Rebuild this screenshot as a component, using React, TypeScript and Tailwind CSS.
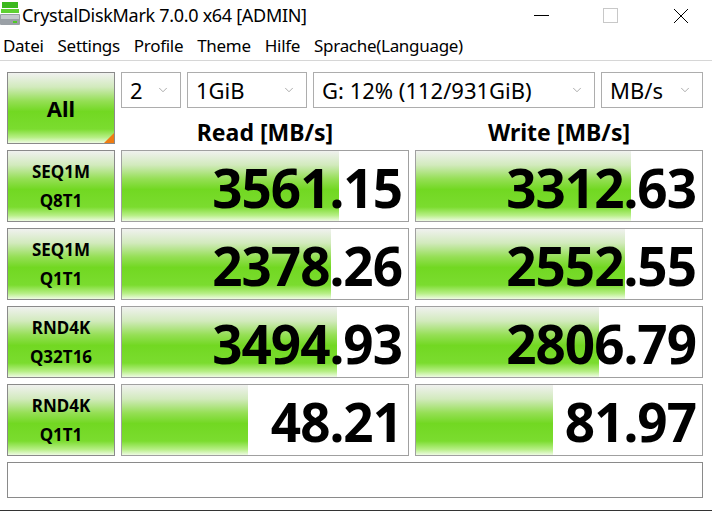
import { ChevronDown } from 'lucide-react';

const rows = [
  { l1: 'SEQ1M', l2: 'Q8T1', read: '3561.15', rp: 76, write: '3312.63', wp: 75 },
  { l1: 'SEQ1M', l2: 'Q1T1', read: '2378.26', rp: 73, write: '2552.55', wp: 73 },
  { l1: 'RND4K', l2: 'Q32T16', read: '3494.93', rp: 75, write: '2806.79', wp: 64 },
  { l1: 'RND4K', l2: 'Q1T1', read: '48.21', rp: 44, write: '81.97', wp: 48 },
];

const green =
  'bg-[linear-gradient(to_bottom,#f0f1ef_0%,#d2eabd_20%,#95df55_40%,#72d822_55%,#7bdc2f_80%,#b7ef86_92%,#eefbe3_100%)]';

const font = "font-['Noto_Sans','Open_Sans',sans-serif]";

const Select = ({ text, w }: { text: string; w: string }) => (
  <div className={`${w} h-9 border border-[#adadad] bg-white flex items-center justify-between pl-2 pr-2.5`}>
    <span className="text-[22px] leading-none text-black">{text}</span>
    <ChevronDown className="h-3.5 w-3.5 text-[#8a8a8a]" strokeWidth={1.2} />
  </div>
);

const Value = ({ value, pct }: { value: string; pct: number }) => (
  <div className="relative h-[72px] border border-[#a0a0a0] bg-white">
    <div className={`absolute left-0 top-0 bottom-0 ${green}`} style={{ width: `${pct}%` }} />
    <div className="relative h-full flex items-center justify-end pr-[6px] pt-1">
      <span className="text-[53px] font-bold leading-[60px] tracking-[-1px] text-black">{value}</span>
    </div>
  </div>
);

export default function App() {
  return (
    <div className={`w-[712px] h-[511px] bg-white overflow-hidden flex flex-col ${font}`}>
      {/* title bar */}
      <div className="h-[31px] flex items-center shrink-0">
        <svg width="20" height="28" viewBox="0 0 20 28" className="shrink-0">
          <rect x="2" y="0" width="16" height="6" fill="#3cb81e" />
          <rect x="1" y="7" width="18" height="4" fill="#5fd032" />
          <rect x="0" y="12" width="20" height="11" rx="1" fill="#9aa0a6" />
          <rect x="1" y="13" width="18" height="4" fill="#c5c9cd" />
          <rect x="13" y="19" width="4" height="2" fill="#4ecb24" />
        </svg>
        <span className="ml-[2px] text-[18px] text-black tracking-[-0.3px]">CrystalDiskMark 7.0.0 x64 [ADMIN]</span>
        <div className="ml-auto flex items-center h-full">
          <div className="w-[46px] flex justify-center">
            <div className="w-[15px] h-px bg-black" />
          </div>
          <div className="w-[46px] ml-[23px] flex justify-center">
            <div className="w-[15px] h-[15px] border border-[#c8c8c8]" />
          </div>
          <div className="w-[46px] ml-[25px] mr-[8px] flex justify-center">
            <svg width="16" height="16" viewBox="0 0 16 16">
              <path d="M1 1L15 15M15 1L1 15" stroke="#000" strokeWidth="1" />
            </svg>
          </div>
        </div>
      </div>

      {/* menu bar */}
      <div className="h-[30px] border-b border-[#d6d6d6] flex items-center gap-[14px] pl-[3px] text-[17px] text-black tracking-[-0.3px] shrink-0">
        <span>Datei</span>
        <span>Settings</span>
        <span>Profile</span>
        <span>Theme</span>
        <span>Hilfe</span>
        <span>Sprache(Language)</span>
      </div>

      {/* main */}
      <div className="pl-[7px] pt-[11px] flex flex-col gap-[6px]">
        <div className="grid grid-cols-[108px_288px_288px] gap-x-[6px]">
          <div className={`relative h-[72px] border border-[#8a8a8a] ${green} flex items-center justify-center`}>
            <span className="text-[22px] font-bold text-black">All</span>
            <div className="absolute right-0 bottom-0 w-0 h-0 border-l-[10px] border-l-transparent border-b-[10px] border-b-[#f07c12]" />
          </div>
          <div className="col-span-2 flex flex-col">
            <div className="flex gap-[6px]">
              <Select text="2" w="w-[60px]" />
              <Select text="1GiB" w="w-[120px]" />
              <Select text="G: 12% (112/931GiB)" w="w-[282px]" />
              <Select text="MB/s" w="w-[102px]" />
            </div>
            <div className="flex-1 grid grid-cols-2 gap-x-[6px] items-center pt-3">
              <div className="text-center text-[23px] leading-none font-bold text-black">Read [MB/s]</div>
              <div className="text-center text-[23px] leading-none font-bold text-black">Write [MB/s]</div>
            </div>
          </div>
        </div>

        {rows.map((r, i) => (
          <div key={i} className="grid grid-cols-[108px_288px_288px] gap-x-[6px]">
            <div className={`h-[72px] border border-[#8a8a8a] ${green} flex flex-col items-center justify-center gap-[12px]`}>
              <span className="text-[17px] font-bold leading-none text-black">{r.l1}</span>
              <span className="text-[17px] font-bold leading-none text-black">{r.l2}</span>
            </div>
            <Value value={r.read} pct={r.rp} />
            <Value value={r.write} pct={r.wp} />
          </div>
        ))}

        <div className="w-[696px] h-9 border border-[#8a8a8a] bg-white" />
      </div>

      <div className="mt-auto h-px bg-[#333]" />
    </div>
  );
}
